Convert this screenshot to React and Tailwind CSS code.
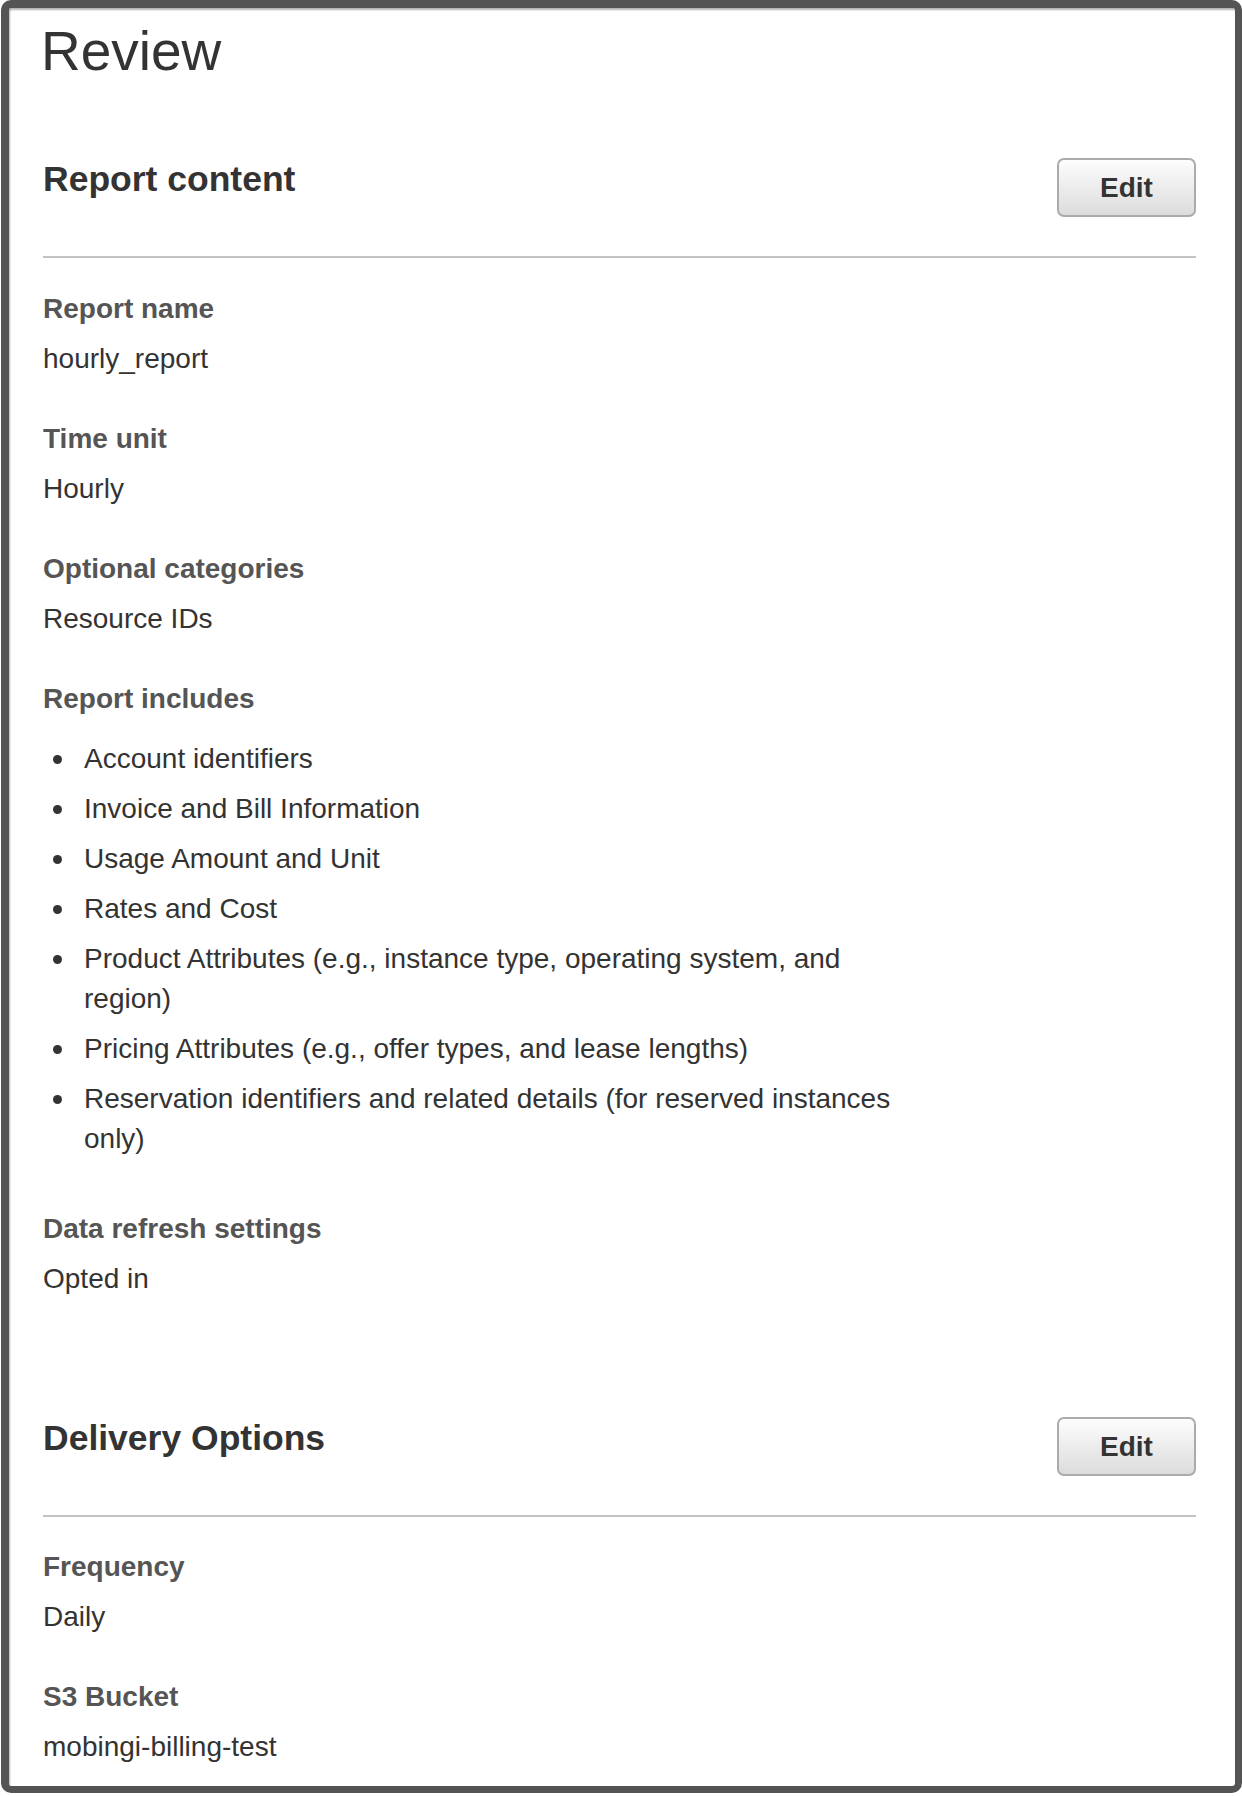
const reportFields = [
  { label: "Report name", value: "hourly_report" },
  { label: "Time unit", value: "Hourly" },
  { label: "Optional categories", value: "Resource IDs" },
];

const includes = [
  "Account identifiers",
  "Invoice and Bill Information",
  "Usage Amount and Unit",
  "Rates and Cost",
  "Product Attributes (e.g., instance type, operating system, and region)",
  "Pricing Attributes (e.g., offer types, and lease lengths)",
  "Reservation identifiers and related details (for reserved instances only)",
];

const deliveryFields = [
  { label: "Frequency", value: "Daily" },
  { label: "S3 Bucket", value: "mobingi-billing-test" },
];

function SectionHeader({ title, className = "" }) {
  return (
    <div className={`flex flex-col ${className}`}>
      <div className="flex items-start justify-between">
        <h2 className="text-[35.5px] leading-[43px] font-bold text-[#333]">{title}</h2>
        <button className="w-[139px] h-[59px] rounded-[7px] border-2 border-[#ababab] bg-gradient-to-b from-[#fdfdfd] to-[#dcdcdc] text-[28px] font-bold text-[#333] leading-none">
          Edit
        </button>
      </div>
      <div className="mt-[39px] h-[2px] bg-[#c3c3c3]" />
    </div>
  );
}

function Field({ label, children }) {
  return (
    <div className="flex flex-col mb-[40px]">
      <div className="text-[28px] leading-[40px] font-bold text-[#555]">{label}</div>
      <div className="mt-[10px] text-[28px] leading-[40px] text-[#333]">{children}</div>
    </div>
  );
}

export default function App() {
  return (
    <div
      className="h-[1796px] w-[1242px] bg-white"
      style={{ fontFamily: '"Liberation Sans", Arial, Helvetica, sans-serif' }}
    >
      <div className="ml-px w-[1241px] h-[1793px] flex flex-col rounded-[10px] border-t-8 border-l-8 border-r-[7px] border-b-[7px] border-[#545454] bg-white shadow-[inset_1px_2px_2px_rgba(0,0,0,0.3)] pl-[34px] pr-[39px] pt-[16px]">
        <h1 className="text-[55px] leading-none font-normal text-[#333] -ml-[2px]">Review</h1>

        {/* Report content */}
        <SectionHeader title="Report content" className="mt-[79px]" />
        <div className="flex flex-col mt-[31px]">
          {reportFields.map((f) => (
            <Field key={f.label} label={f.label}>
              {f.value}
            </Field>
          ))}

          <div className="flex flex-col mb-[40px]">
            <div className="text-[28px] leading-[40px] font-bold text-[#555]">Report includes</div>
            <ul className="flex flex-col gap-[10px] mt-[20px] mb-[10px]">
              {includes.map((item) => (
                <li key={item} className="flex items-start text-[28px] leading-[40px] text-[#333]">
                  <span className="w-[40px] h-[40px] flex items-center pl-[10px] shrink-0">
                    <span className="w-[9px] h-[9px] rounded-full bg-[#333]" />
                  </span>
                  <span className="ml-[1px] w-[836px]">{item}</span>
                </li>
              ))}
            </ul>
          </div>

          <Field label="Data refresh settings">Opted in</Field>
        </div>

        {/* Delivery Options */}
        <SectionHeader title="Delivery Options" className="mt-[78px]" />
        <div className="flex flex-col mt-[30px]">
          {deliveryFields.map((f) => (
            <Field key={f.label} label={f.label}>
              {f.value}
            </Field>
          ))}
        </div>
      </div>
    </div>
  );
}
